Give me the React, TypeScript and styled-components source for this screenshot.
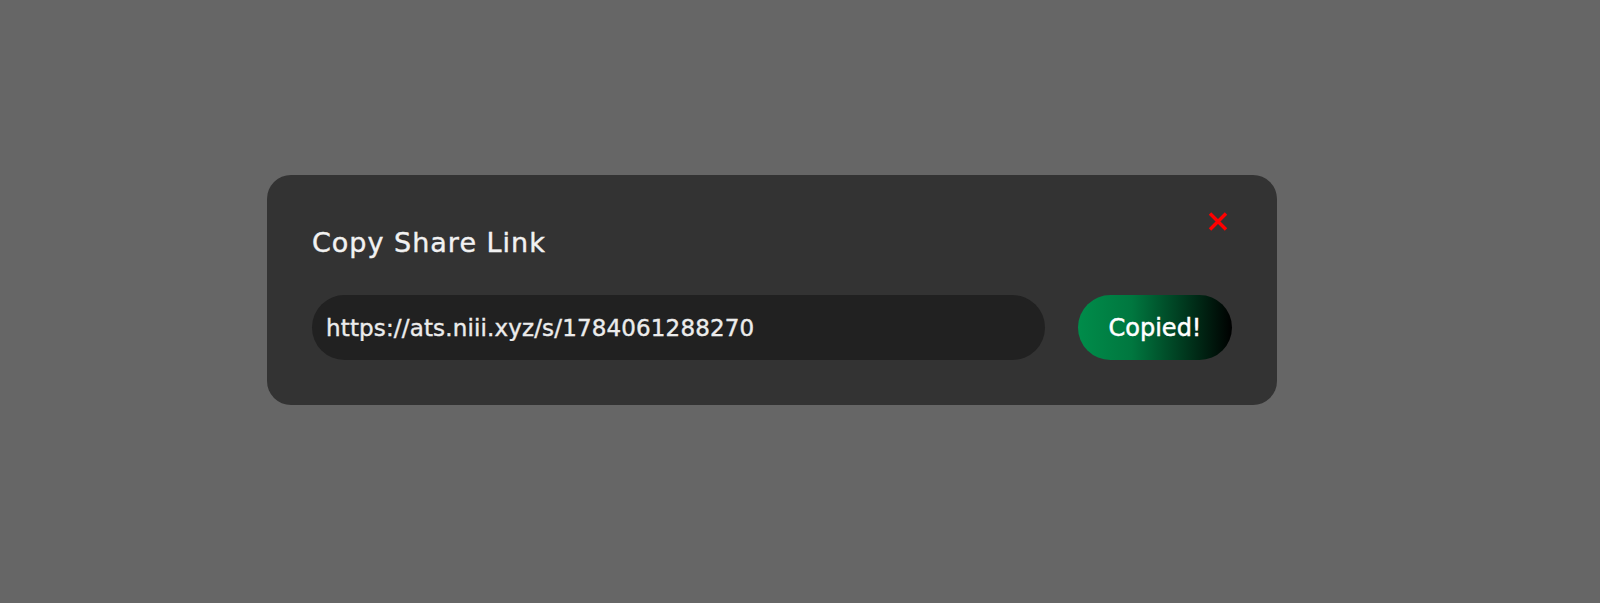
import styled, { createGlobalStyle } from "styled-components";

const GlobalStyle = createGlobalStyle`
  html, body {
    margin: 0;
    padding: 0;
    background: #666666;
  }
  body {
    font-family: "DejaVu Sans", "Noto Sans", sans-serif;
  }
  * {
    box-sizing: border-box;
  }
`;

const Backdrop = styled.div`
  display: flex;
  align-items: center;
  justify-content: center;
  height: 100vh;
  min-height: 603px;
  padding: 0 56px 23px 0;
  background: #666666;
`;

const Modal = styled.div`
  position: relative;
  width: 1010px;
  padding: 45px;
  background: #333333;
  border-radius: 24px;
  display: flex;
  flex-direction: column;
  gap: 30px;
`;

const Title = styled.h2`
  margin: 0;
  font-size: 27px;
  line-height: 45px;
  font-weight: 400;
  letter-spacing: 1px;
  color: #f2f2f2;
  -webkit-text-stroke: 0.4px #f2f2f2;
`;

const CloseButton = styled.button`
  position: absolute;
  top: 37px;
  right: 49px;
  width: 20px;
  height: 19px;
  padding: 0;
  border: none;
  background: transparent;
  cursor: pointer;
  display: flex;

  svg {
    display: block;
  }
`;

const LinkRow = styled.div`
  display: flex;
  align-items: center;
  gap: 33px;
`;

const LinkInput = styled.input`
  flex: 1;
  height: 65px;
  padding: 0 14px;
  border: none;
  outline: none;
  border-radius: 33px;
  background: #212121;
  color: #ececec;
  font-family: "DejaVu Sans", "Noto Sans", sans-serif;
  font-size: 23px;
  letter-spacing: 0.15px;
  -webkit-text-stroke: 0.4px #ececec;
`;

const CopyButton = styled.button`
  width: 154px;
  height: 65px;
  border: none;
  border-radius: 33px;
  background: linear-gradient(90deg, #008c4a 0%, #00773f 35%, #000000 100%);
  color: #ffffff;
  font-family: "DejaVu Sans", "Noto Sans", sans-serif;
  font-size: 24px;
  -webkit-text-stroke: 0.5px #ffffff;
  cursor: pointer;
`;

export default function App() {
  return (
    <>
      <GlobalStyle />
      <Backdrop>
        <Modal>
          <CloseButton aria-label="Close">
            <svg width="20" height="19" viewBox="0 0 20 19">
              <path
                d="M2 1.5 L18 17.5 M18 1.5 L2 17.5"
                stroke="#ff0000"
                strokeWidth="3.4"
                strokeLinecap="butt"
              />
            </svg>
          </CloseButton>
          <Title>Copy Share Link</Title>
          <LinkRow>
            <LinkInput readOnly value="https://ats.niii.xyz/s/1784061288270" />
            <CopyButton>Copied!</CopyButton>
          </LinkRow>
        </Modal>
      </Backdrop>
    </>
  );
}
